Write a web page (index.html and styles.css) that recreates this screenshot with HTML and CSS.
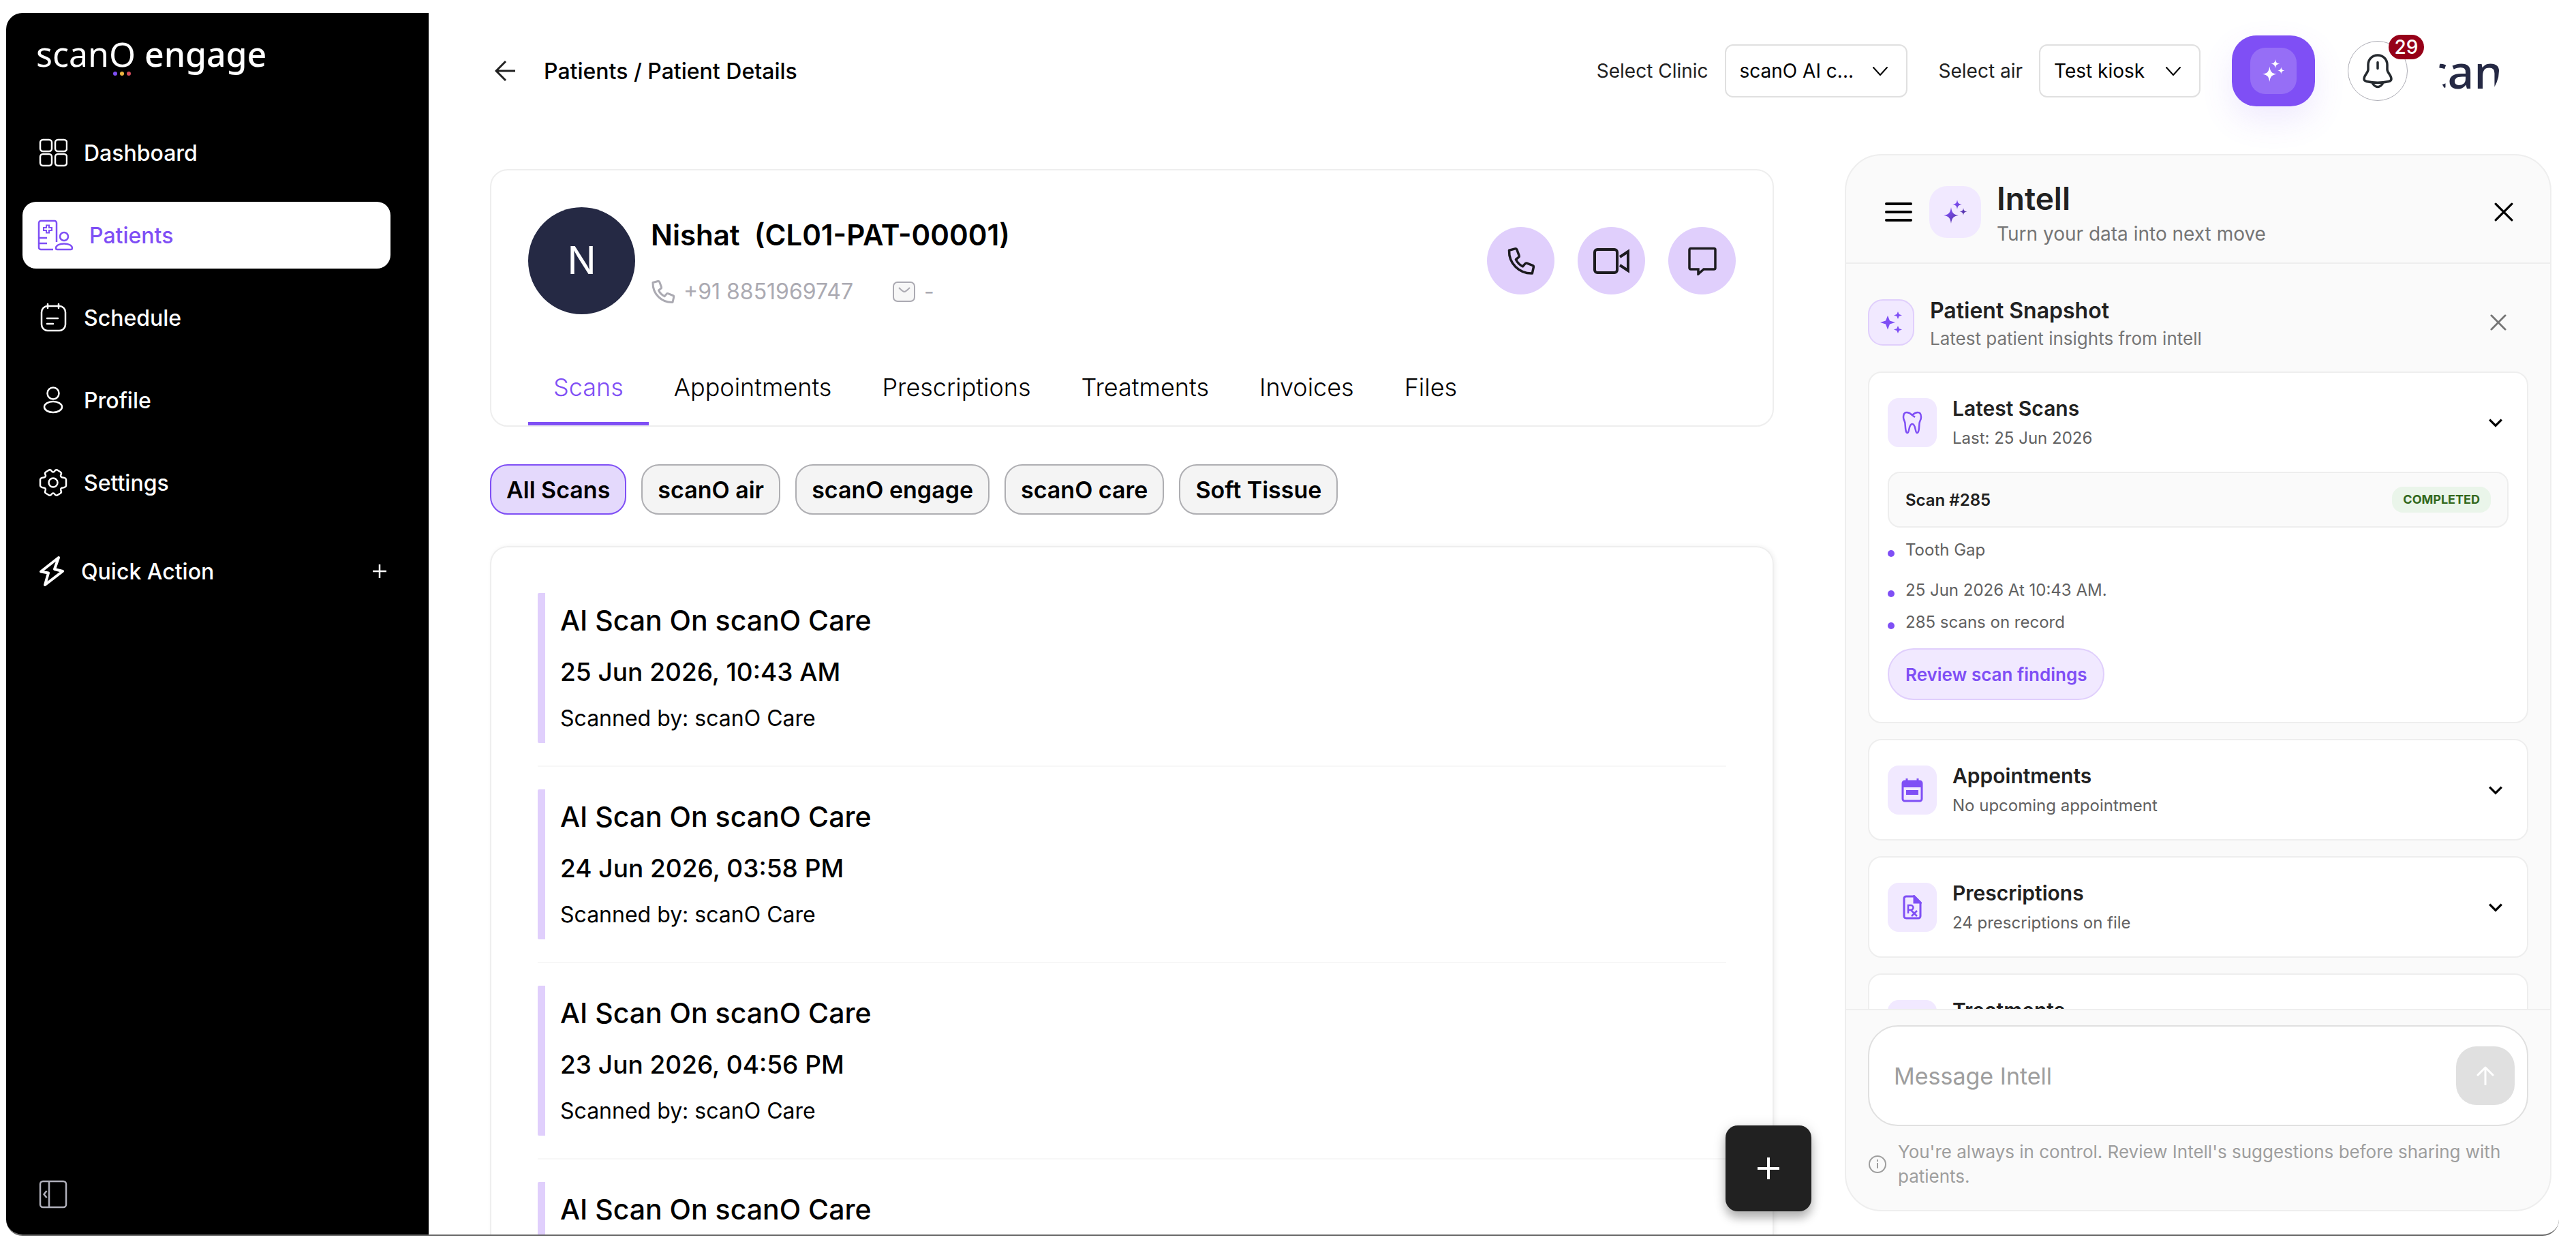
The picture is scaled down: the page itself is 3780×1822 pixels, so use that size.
FILE: index.html
```html
<!DOCTYPE html>
<html lang="en">
	<head>
		<meta charset="UTF-8" />
		<meta name="viewport" content="width=device-width, initial-scale=1.0" />
		<title>scanO engage - Patient Details</title>
		<link rel="stylesheet" href="styles.css">
	</head>
	<body>
		<!-- shared icons -->
		<svg class="defs" width="0" height="0" aria-hidden="true">
			<defs>
				<linearGradient id="spark-fill" x1="0" y1="0" x2="1" y2="1">
					<stop offset="0.3" stop-color="#7f4ff5" />
					<stop offset="1" stop-color="#3b2478" />
				</linearGradient>
				<symbol id="i-chevron" viewBox="0 0 24 24">
					<path d="M2 7l10 11L22 7" fill="none" stroke="currentColor" stroke-width="2" stroke-linecap="round" stroke-linejoin="round" />
				</symbol>
				<symbol id="i-chevron-bold" viewBox="0 0 20 20">
					<path d="M2 6l8 8 8-8" fill="none" stroke="currentColor" stroke-width="3" />
				</symbol>
				<symbol id="i-close" viewBox="0 0 26 26">
					<path d="M2 2l22 22M24 2L2 24" fill="none" stroke="currentColor" stroke-width="3" stroke-linecap="round" />
				</symbol>
				<symbol id="i-call" viewBox="0 0 36 36">
					<path d="M3 4.500L10.500 2.500a2 2 0 0 1 2.300 1.200L15.500 11a2 2 0 0 1-.6 2.200L11.500 16c2 4 4.800 6.800 8.600 8.700l3-3.400a2 2 0 0 1 2.200-.6l7.200 2.800a2 2 0 0 1 1.200 2.300L32 33.500C15.500 34 2.500 21 3 4.500z" fill="none" stroke="currentColor" stroke-width="3" stroke-linejoin="round" />
				</symbol>
				<symbol id="i-sparkles" viewBox="0 0 36 36">
					<path d="M12 11c1.200 8 3 10.600 11 12-8 1.400-9.800 4-11 12-1.200-8-3-10.600-11-12 8-1.400 9.800-4 11-12zM21 0c.8 5 2 6.200 7 7-5 .8-6.200 2-7 7-.8-5-2-6.200-7-7 5-.8 6.200-2 7-7zM30 12c.6 4 1.600 5 5.500 5.600C31.600 18.200 30.600 19.200 30 23c-.6-3.800-1.600-4.800-5.500-5.400C28.400 17 29.400 16 30 12z" />
				</symbol>
			</defs>
		</svg>

		<div class="app">
			<aside class="sidebar">
				<div class="logo">
					scan<span class="logo-o">O<svg class="logo-dots" viewBox="0 0 28 6"><circle cx="4" cy="3" r="3" fill="#7f4ff5" /><circle cx="14" cy="3" r="3" fill="#edb540" /><circle cx="24" cy="3" r="3" fill="#d34c5c" /></svg></span> <b>engage</b>
				</div>

				<nav class="nav">
					<a class="nav-item" href="#">
						<svg width="42" height="42" viewBox="0 0 42 42" fill="none" stroke="currentColor" stroke-width="2.500"><rect x="2" y="2" width="17" height="17" rx="4" /><rect x="24" y="2" width="17" height="17" rx="4" /><rect x="2" y="23" width="17" height="17" rx="4" /><rect x="24" y="23" width="17" height="17" rx="4" /></svg>
						Dashboard
					</a>
					<a class="nav-item active" href="#">
						<svg width="52" height="46" viewBox="0 0 52 46" fill="none" stroke="currentColor" stroke-width="2.500"><path d="M28 33V5a3 3 0 0 0-3-3H5a3 3 0 0 0-3 3v36a3 3 0 0 0 3 3h18M2 27h12M2 35h12" /><path d="M13 8.500h4v3.500h4v4h-4v3.500h-4V16H9v-4h4z" stroke-width="2" /><circle cx="39" cy="25" r="6" /><path d="M27 42c0-4 5-6.500 12-6.500S51 38 51 42c0 1.500-1 2-2 2H29c-1 0-2-.5-2-2z" /></svg>
						Patients
					</a>
					<a class="nav-item" href="#">
						<svg width="42" height="42" viewBox="0 0 42 42" fill="none" stroke="currentColor" stroke-width="2.500" stroke-linecap="round"><rect x="4" y="4" width="35" height="36" rx="9" /><path d="M13 1v6M29 1v6M12 22h16M12 30h9" /></svg>
						Schedule
					</a>
					<a class="nav-item" href="#">
						<svg width="42" height="42" viewBox="0 0 42 42" fill="none" stroke="currentColor" stroke-width="2.500"><circle cx="21" cy="11" r="8.500" /><ellipse cx="21" cy="31" rx="13" ry="8" /></svg>
						Profile
					</a>
					<a class="nav-item" href="#">
						<svg width="42" height="42" viewBox="0 0 42 42" fill="none" stroke="currentColor" stroke-width="2.500" stroke-linejoin="round"><circle cx="21" cy="21" r="6.500" /><path d="M15 2.500c2-.8 3 .3 3.800 1.600 1.200 1.900 3.200 1.900 4.400 0C24 2.800 25 1.700 27 2.500l4.500 2.700c1.800 1.200 1.700 2.700 1 4-1.200 2.300 0 4.300 2.500 4.400 3 .2 4.700 1 5 3v8.800c-.3 2-2 2.800-5 3-2.500.1-3.700 2.100-2.500 4.400.7 1.300.8 2.800-1 4L27 39.500c-2 .8-3-.3-3.800-1.600-1.200-1.900-3.200-1.900-4.400 0-.8 1.300-1.800 2.400-3.800 1.600l-4.500-2.700c-1.800-1.200-1.700-2.700-1-4 1.200-2.300 0-4.300-2.500-4.400-3-.2-4.700-1-5-3v-8.800c.3-2 2-2.800 5-3 2.500-.1 3.700-2.100 2.500-4.400-.7-1.300-.8-2.800 1-4z" /></svg>
						Settings
					</a>
				</nav>

				<button class="quick-action" type="button">
					<svg width="38" height="46" viewBox="0 0 38 46" fill="none" stroke="currentColor" stroke-width="4" stroke-linejoin="round"><path d="M29 3L3 23.500l11 2L9 43l26-20-12-3z" /></svg>
					Quick Action
					<svg class="quick-plus" width="20" height="20" viewBox="0 0 20 20" stroke="currentColor" stroke-width="2.500"><path d="M10 0v20M0 10h20" /></svg>
				</button>

				<button class="collapse" type="button" aria-label="Collapse menu">
					<svg width="42" height="42" viewBox="0 0 42 42" fill="none" stroke="currentColor" stroke-width="2.500"><rect x="2" y="2" width="38" height="38" rx="4" /><path d="M15 2v38M11.500 16L7.500 21l4 5" /></svg>
				</button>
			</aside>

			<main class="main">
				<header class="topbar">
					<button class="back" type="button" aria-label="Back">
						<svg width="32" height="32" viewBox="0 0 32 32" fill="none" stroke="currentColor" stroke-width="3"><path d="M30 16H3M16 2L2 16l14 14" /></svg>
					</button>
					<h1 class="crumbs">Patients / Patient Details</h1>

					<label class="picker-label" for="clinic">Select Clinic</label>
					<div class="picker picker-clinic">
						<select id="clinic">
							<option>scanO AI c...</option>
						</select>
						<svg><use href="#i-chevron" /></svg>
					</div>

					<label class="picker-label" for="air">Select air</label>
					<div class="picker picker-air">
						<select id="air">
							<option>Test kiosk</option>
						</select>
						<svg><use href="#i-chevron" /></svg>
					</div>

					<button class="ai-btn" type="button" aria-label="Open Intell">
						<span><svg width="34" height="34" fill="currentColor"><use href="#i-sparkles" /></svg></span>
					</button>

					<button class="bell" type="button" aria-label="Notifications">
						<svg width="46" height="52" viewBox="0 0 46 52" fill="none" stroke="currentColor" stroke-width="3.500" stroke-linecap="round" stroke-linejoin="round"><path d="M23 3c-8.500 0-14 6.500-14 14v7c0 5-6 8-6 14 0 2.500 2 3 4 3.500 11 2.500 21 2.500 32 0 2-.5 4-1 4-3.500 0-6-6-9-6-14v-7c0-7.500-5.500-14-14-14zM15 43.500c2 3.500 5 6 8 6s6-2.500 8-6M23 13.500v9" /></svg>
						<span class="badge">29</span>
					</button>

					<svg class="clinic-logo" viewBox="0 0 88 88"><text x="-21" y="70">can</text></svg>
				</header>

				<div class="content">
					<section class="patient">
						<div class="patient-card">
							<div class="patient-head">
								<div class="avatar">N</div>
								<div class="patient-info">
									<h2>Nishat &nbsp;(CL01-PAT-00001)</h2>
									<p>
										<svg width="36" height="36"><use href="#i-call" /></svg>
										<span class="phone">+91 8851969747</span>
										<svg width="34" height="32" viewBox="0 0 34 32" fill="#f7f7f7" stroke="currentColor" stroke-width="2"><rect x="1" y="2" width="31" height="28" rx="6" /><path d="M9 10c3 3 6 6 8 6s5-3 8-6" fill="none" /></svg>
										<span>-</span>
									</p>
								</div>
								<div class="contact">
									<button type="button" aria-label="Call"><svg width="42" height="42"><use href="#i-call" /></svg></button>
									<button type="button" aria-label="Video call"><svg width="54" height="38" viewBox="0 0 54 38" fill="none" stroke="currentColor" stroke-width="4"><rect x="2" y="2" width="33" height="34" rx="4" /><path d="M39 13l12-8v28l-12-8" /></svg></button>
									<button type="button" aria-label="Message"><svg width="42" height="42" viewBox="0 0 42 42" fill="none" stroke="currentColor" stroke-width="3.500"><path d="M4 2.500h34a2 2 0 0 1 2 2V31a2 2 0 0 1-2 2H23l-8 7v-7H4a2 2 0 0 1-2-2V4.500a2 2 0 0 1 2-2z" /></svg></button>
								</div>
							</div>
							<div class="tabs">
								<button class="tab active" type="button">Scans</button>
								<button class="tab" type="button">Appointments</button>
								<button class="tab" type="button">Prescriptions</button>
								<button class="tab" type="button">Treatments</button>
								<button class="tab" type="button">Invoices</button>
								<button class="tab" type="button">Files</button>
							</div>
						</div>

						<div class="chips">
							<button class="chip active" type="button">All Scans</button>
							<button class="chip" type="button">scanO air</button>
							<button class="chip" type="button">scanO engage</button>
							<button class="chip" type="button">scanO care</button>
							<button class="chip" type="button">Soft Tissue</button>
						</div>

						<ul class="scans">
							<li>
								<div class="scan">
									<h3>AI Scan On scanO Care</h3>
									<p class="scan-date">25 Jun 2026, 10:43 AM</p>
									<p class="scan-by">Scanned by: scanO Care</p>
								</div>
							</li>
							<li>
								<div class="scan">
									<h3>AI Scan On scanO Care</h3>
									<p class="scan-date">24 Jun 2026, 03:58 PM</p>
									<p class="scan-by">Scanned by: scanO Care</p>
								</div>
							</li>
							<li>
								<div class="scan">
									<h3>AI Scan On scanO Care</h3>
									<p class="scan-date">23 Jun 2026, 04:56 PM</p>
									<p class="scan-by">Scanned by: scanO Care</p>
								</div>
							</li>
							<li>
								<div class="scan">
									<h3>AI Scan On scanO Care</h3>
								</div>
							</li>
						</ul>

						<button class="fab" type="button" aria-label="Add">
							<svg width="32" height="32" viewBox="0 0 32 32" stroke="currentColor" stroke-width="4"><path d="M16 0v32M0 16h32" /></svg>
						</button>
					</section>

					<aside class="intell">
						<header class="intell-head">
							<button class="icon-btn" type="button" aria-label="Menu">
								<svg width="42" height="30" viewBox="0 0 42 30" stroke="currentColor" stroke-width="4" stroke-linecap="round"><path d="M3 3h36M3 15h36M3 27h36" /></svg>
							</button>
							<div class="tile tile-head"><svg width="36" height="36" fill="url(#spark-fill)"><use href="#i-sparkles" /></svg></div>
							<div class="intell-title">
								<h2>Intell</h2>
								<p>Turn your data into next move</p>
							</div>
							<button class="icon-btn" type="button" aria-label="Close"><svg width="28" height="28"><use href="#i-close" /></svg></button>
						</header>

						<div class="intell-body">
							<div class="snapshot">
								<div class="tile tile-snap"><svg width="32" height="32" viewBox="0 0 32 32" fill="currentColor"><path d="M11 6l3 7.500 8 2.500-8 2.500-3 8-3-8L0 16l8-2.500zM26 0l1.700 4L32 5.500 27.700 7 26 11l-1.700-4L20 5.500 24.300 4zM26 21l1.700 4 4.300 1.500-4.300 1.500L26 32l-1.700-4-4.300-1.500 4.300-1.500z" /></svg></div>
								<div>
									<h3>Patient Snapshot</h3>
									<p>Latest patient insights from intell</p>
								</div>
								<button class="icon-btn" type="button" aria-label="Close snapshot"><svg width="24" height="24"><use href="#i-close" /></svg></button>
							</div>

							<div class="card">
								<div class="card-head">
									<div class="tile"><svg width="30" height="34" viewBox="0 0 30 34" fill="none" stroke="currentColor" stroke-width="2.500" stroke-linejoin="round"><path d="M15 6C12 3 9 2 7 2 3.500 2 2 5 2 9c0 4 2 5 2.500 9 .5 6 .5 14 3.500 14 3 0 1.500-13 7-13s4 13 7 13c3 0 3-8 3.500-14C26 14 28 13 28 9c0-4-1.500-7-5-7-2 0-5 1-8 4zl4 3" /></svg></div>
									<div class="card-text">
										<h4>Latest Scans</h4>
										<p>Last: 25 Jun 2026</p>
									</div>
									<button class="icon-btn" type="button" aria-label="Toggle"><svg width="22" height="22"><use href="#i-chevron-bold" /></svg></button>
								</div>
								<div class="scan-row">
									<span>Scan #285</span>
									<span class="status">COMPLETED</span>
								</div>
								<ul class="facts">
									<li class="finding">Tooth Gap</li>
									<li>25 Jun 2026 At 10:43 AM.</li>
									<li>285 scans on record</li>
								</ul>
								<button class="review" type="button">Review scan findings</button>
							</div>

							<div class="card">
								<div class="card-head">
									<div class="tile"><svg width="32" height="36" viewBox="0 0 32 36"><path d="M8 1v6M24 1v6" stroke="currentColor" stroke-width="3" /><rect x="2" y="5" width="28" height="29" rx="3" fill="none" stroke="currentColor" stroke-width="3" /><path d="M1 6h30v8H1z" fill="currentColor" /><path d="M7 18h18v7H7z" fill="currentColor" /></svg></div>
									<div class="card-text">
										<h4>Appointments</h4>
										<p>No upcoming appointment</p>
									</div>
									<button class="icon-btn" type="button" aria-label="Toggle"><svg width="22" height="22"><use href="#i-chevron-bold" /></svg></button>
								</div>
							</div>

							<div class="card">
								<div class="card-head">
									<div class="tile"><svg width="28" height="36" viewBox="0 0 28 36" fill="none" stroke="currentColor" stroke-width="3"><path d="M17 2H5a3 3 0 0 0-3 3v26a3 3 0 0 0 3 3h18a3 3 0 0 0 3-3V11z" /><path d="M17 2v9h9z" fill="currentColor" /><path d="M8 27V15h4a3 3 0 0 1 0 7H8M12 22l9 9M21 23l-8 8" stroke-width="2.500" /></svg></div>
									<div class="card-text">
										<h4>Prescriptions</h4>
										<p>24 prescriptions on file</p>
									</div>
									<button class="icon-btn" type="button" aria-label="Toggle"><svg width="22" height="22"><use href="#i-chevron-bold" /></svg></button>
								</div>
							</div>

							<div class="card">
								<div class="card-head">
									<div class="tile"></div>
									<div class="card-text">
										<h4>Treatments</h4>
									</div>
								</div>
							</div>
						</div>

						<footer class="intell-foot">
							<div class="composer">
								<input type="text" placeholder="Message Intell" aria-label="Message Intell">
								<button type="button" aria-label="Send">
									<svg width="28" height="28" viewBox="0 0 28 28" fill="none" stroke="currentColor" stroke-width="3" stroke-linecap="round" stroke-linejoin="round"><path d="M14 27V2M3 13L14 2l11 11" /></svg>
								</button>
							</div>
							<p class="note">
								<svg width="28" height="28" viewBox="0 0 28 28" fill="none" stroke="currentColor" stroke-width="2"><circle cx="14" cy="14" r="12" /><path d="M14 12v8M14 7v3" /></svg>
								You're always in control. Review Intell's suggestions before sharing with patients.
							</p>
						</footer>
					</aside>
				</div>
			</main>
		</div>
	</body>
</html>
```
FILE: styles.css
```css
* {
	box-sizing: border-box;
}

body {
	margin: 0;
	background: #fff;
	color: #000;
	font-family: Inter, sans-serif;
	font-size: 32px;
}

h1, h2, h3, h4, p, ul {
	margin: 0;
	padding: 0;
	font-weight: 400;
}

ul {
	list-style: none;
}

button {
	padding: 0;
	border: none;
	background: none;
	color: inherit;
	font: inherit;
	cursor: pointer;
}

svg {
	flex: none;
}

.defs {
	position: absolute;
}

.app {
	display: flex;
	height: calc(100vh - 28px);
	margin: 19px 25px 9px 9px;
	border-bottom: 2px solid #6b6b6b;
	border-radius: 24px;
	overflow: hidden;
}

/* sidebar */
.sidebar {
	display: flex;
	flex-direction: column;
	flex: none;
	width: 620px;
	padding: 28px 56px 38px 24px;
	background: #000;
	color: #fff;
	font-weight: 500;
}

.logo {
	margin: 0 0 64px 20px;
	font-family: "Noto Sans", sans-serif;
	font-size: 50px;
	font-weight: 400;
	line-height: 64px;
}

.logo b {
	font-weight: 500;
}

.logo-o {
	position: relative;
}

.logo-dots {
	position: absolute;
	left: 5px;
	bottom: 2px;
	width: 28px;
	height: 6px;
}

.nav {
	display: flex;
	flex-direction: column;
	gap: 23px;
}

.nav-item {
	display: flex;
	align-items: center;
	gap: 24px;
	height: 98px;
	padding-left: 24px;
	border-radius: 20px;
	color: #fff;
	text-decoration: none;
}

.nav-item.active {
	padding-left: 22px;
	background: #fff;
	color: #7f4ff5;
}

.quick-action {
	display: flex;
	align-items: center;
	gap: 24px;
	height: 98px;
	margin-top: 32px;
	padding: 0 6px 0 24px;
}

.quick-plus {
	margin-left: auto;
}

.collapse {
	height: 42px;
	margin: auto auto 0 24px;
	color: #b0b0bb;
}

/* top bar */
.main {
	display: flex;
	flex-direction: column;
	flex: 1;
	min-width: 0;
	padding: 0 11px 0 90px;
}

.topbar {
	display: flex;
	align-items: center;
	flex: none;
	height: 170px;
	padding: 0 77px 0 7px;
}

.back {
	height: 32px;
	color: #212121;
}

.crumbs {
	margin: 0 auto 0 40px;
	font-size: 32px;
	font-weight: 500;
}

.picker-label {
	color: #212121;
	font-size: 28px;
}

.picker {
	position: relative;
	margin: 0 46px 0 24px;
}

.picker select {
	width: 100%;
	height: 78px;
	padding: 0 20px;
	border: 2px solid #e0e0e0;
	border-radius: 12px;
	background: #fff;
	color: #000;
	font: 400 28px Inter, sans-serif;
	appearance: none;
}

.picker svg {
	position: absolute;
	top: 27px;
	right: 28px;
	width: 24px;
	height: 24px;
	pointer-events: none;
}

.picker-clinic {
	width: 268px;
}

.picker-air {
	width: 237px;
}

.ai-btn {
	display: flex;
	align-items: center;
	justify-content: center;
	width: 122px;
	height: 104px;
	border-radius: 36px;
	background: #7f4ff5;
	box-shadow: 0 20px 48px rgba(127, 79, 245, 0.12);
	color: #fff;
}

.ai-btn span {
	display: flex;
	align-items: center;
	justify-content: center;
	width: 68px;
	height: 68px;
	border-radius: 22px;
	background: rgba(255, 255, 255, 0.18);
}

.bell {
	position: relative;
	display: flex;
	align-items: center;
	justify-content: center;
	width: 88px;
	height: 88px;
	margin: 0 46px 0 48px;
	border: 1px solid #aeaeb6;
	border-radius: 50%;
	color: #24292e;
}

.badge {
	position: absolute;
	top: -10px;
	right: -25px;
	width: 52px;
	height: 36px;
	border-radius: 18px;
	background: #960018;
	color: #fff;
	font-size: 28px;
	font-weight: 500;
	line-height: 36px;
	text-align: center;
}

.clinic-logo {
	width: 88px;
	height: 88px;
	border-radius: 50%;
	overflow: hidden;
	fill: #252944;
	font: 500 68px "Noto Sans", sans-serif;
}

/* patient */
.content {
	display: flex;
	flex: 1;
	gap: 104px;
	min-height: 0;
	padding-top: 37px;
}

.patient {
	position: relative;
	display: flex;
	flex-direction: column;
	flex: 1;
	min-width: 0;
	padding-top: 22px;
}

.patient-card {
	flex: none;
	padding: 54px 54px 0;
	border: 2px solid #eee;
	border-radius: 26px;
}

.patient-head {
	display: flex;
	align-items: center;
	margin-bottom: 56px;
}

.avatar {
	width: 157px;
	height: 157px;
	border-radius: 50%;
	background: #252944;
	color: #fff;
	font-size: 56px;
	line-height: 157px;
	text-align: center;
}

.patient-info {
	flex: 1;
	margin-left: 23px;
}

.patient-info h2 {
	margin-bottom: 36px;
	font-size: 42px;
	font-weight: 600;
	line-height: 54px;
}

.patient-info p {
	display: flex;
	align-items: center;
	gap: 12px;
	color: #abaab2;
	line-height: 40px;
}

.phone {
	margin-right: 46px;
}

.contact {
	display: flex;
	gap: 34px;
}

.contact button {
	display: flex;
	align-items: center;
	justify-content: center;
	width: 99px;
	height: 99px;
	border-radius: 50%;
	background: #e0cffc;
	color: #1c1b1f;
}

.tabs {
	display: flex;
}

.tab {
	height: 107px;
	padding: 0 37px;
	border-bottom: 5px solid transparent;
	font-size: 36px;
	font-weight: 300;
}

.tab.active {
	border-color: #7f4ff5;
	color: #7f4ff5;
}

.chips {
	display: flex;
	flex: none;
	gap: 22px;
	margin: 55px 0 46px;
}

.chip {
	height: 74px;
	padding: 0 22px;
	border: 2px solid #aeaeb2;
	border-radius: 26px;
	background: #f4f4f4;
	font-size: 34px;
	font-weight: 600;
}

.chip.active {
	border-color: #7f4ff5;
	background: #e4d9fc;
}

.scans {
	flex: 1;
	min-height: 0;
	padding: 67px 68px 0;
	border: 2px solid #eee;
	border-bottom: none;
	border-radius: 26px 26px 0 0;
	box-shadow: 2px 0 6px rgba(0, 0, 0, 0.06);
	overflow: hidden;
}

.scans li {
	margin-bottom: 33px;
	padding-bottom: 33px;
	border-bottom: 2px solid #f7f7f7;
}

.scan {
	height: 220px;
	padding: 12px 0 0 22px;
	border-left: 11px solid #e0cffc;
	border-radius: 2px;
}

.scan h3 {
	font-size: 41px;
	font-weight: 500;
	line-height: 56px;
}

.scan-date {
	margin: 24px 0;
	font-size: 37px;
	font-weight: 500;
	line-height: 48px;
}

.scan-by {
	line-height: 40px;
}

/* floats over the end of the list */
.fab {
	position: absolute;
	right: -55px;
	bottom: 34px;
	display: flex;
	align-items: center;
	justify-content: center;
	width: 126px;
	height: 126px;
	border-radius: 18px;
	background: #212121;
	box-shadow: 0 10px 14px rgba(0, 0, 0, 0.25), 0 2px 20px rgba(0, 0, 0, 0.12);
	color: #fff;
}

/* intell panel */
.intell {
	display: flex;
	flex-direction: column;
	flex: none;
	width: 1037px;
	margin-bottom: 34px;
	border: 2px solid #eee;
	border-radius: 54px;
	background: #fafafa;
	color: #212121;
	overflow: hidden;
}

.icon-btn {
	display: flex;
	color: #000;
}

.intell-head {
	display: flex;
	align-items: center;
	flex: none;
	height: 159px;
	padding: 8px 54px 0 56px;
	border-bottom: 2px solid #eee;
}

.tile {
	display: flex;
	align-items: center;
	justify-content: center;
	flex: none;
	width: 72px;
	height: 72px;
	margin-right: 23px;
	border-radius: 16px;
	background: #f1e9ff;
	color: #7f4ff5;
}

.tile-head {
	width: 76px;
	height: 76px;
	margin-left: 24px;
	border-radius: 26px;
}

.intell-title {
	flex: 1;
}

.intell-title h2 {
	font-size: 46px;
	font-weight: 600;
	line-height: 64px;
}

.intell-title p {
	color: #757575;
	font-size: 28px;
	line-height: 40px;
}

.intell-body {
	flex: 1;
	min-height: 0;
	padding: 45px 32px 0;
	overflow: hidden;
}

.snapshot {
	display: flex;
	align-items: center;
	margin-bottom: 31px;
}

.tile-snap {
	width: 68px;
	height: 68px;
	border: 2px solid #e0cffc;
	border-radius: 22px;
}

.snapshot h3 {
	font-size: 32px;
	font-weight: 600;
	line-height: 48px;
}

.snapshot p {
	color: #757575;
	font-size: 26px;
	line-height: 34px;
}

.snapshot .icon-btn {
	margin: 0 32px 0 auto;
	color: #757575;
}

.card {
	margin-bottom: 23px;
	padding: 32px 27px;
	border: 2px solid #eee;
	border-radius: 20px;
	background: #fff;
}

.card-head {
	display: flex;
	align-items: center;
	height: 81px;
}

.card-text {
	align-self: stretch;
}

.card-head h4 {
	font-size: 30px;
	font-weight: 600;
	line-height: 40px;
}

.card-head p {
	margin-top: 8px;
	color: #616161;
	font-size: 24px;
	line-height: 32px;
}

.card-head .icon-btn {
	margin: 0 8px 0 auto;
}

.scan-row {
	display: flex;
	align-items: center;
	justify-content: space-between;
	height: 82px;
	margin: 32px 0 17px;
	padding: 0 24px;
	border: 2px solid #eee;
	border-radius: 18px;
	background: #fafafa;
	font-size: 24px;
	font-weight: 600;
}

.status {
	padding: 0 16px;
	border-radius: 16px;
	background: #eaf5ea;
	color: #33691e;
	font-size: 18px;
	font-weight: 700;
	line-height: 38px;
}

.facts li {
	display: flex;
	align-items: center;
	gap: 16px;
	margin-bottom: 15px;
	color: #616161;
	font-size: 24px;
	line-height: 32px;
}

.facts li::before {
	content: "";
	width: 10px;
	height: 10px;
	margin-top: 10px;
	border-radius: 50%;
	background: #7f4ff5;
}

.facts .finding {
	margin-bottom: 27px;
}

.review {
	height: 76px;
	margin-top: 7px;
	padding: 0 24px;
	border: 2px solid #e0cffc;
	border-radius: 38px;
	background: #f1e9ff;
	color: #7f4ff5;
	font-size: 26px;
	font-weight: 600;
}

.intell-foot {
	flex: none;
	padding: 22px 32px 31px;
	border-top: 2px solid #eee;
}

.composer {
	display: flex;
	align-items: center;
	height: 148px;
	padding: 0 18px 0 36px;
	border: 2px solid #e0e0e0;
	border-radius: 44px;
	background: #fff;
}

.composer input {
	flex: 1;
	min-width: 0;
	padding: 0;
	border: none;
	outline: none;
	background: none;
	font: 400 34px Inter, sans-serif;
}

.composer input::placeholder {
	color: #9e9e9e;
}

.composer button {
	display: flex;
	align-items: center;
	justify-content: center;
	width: 86px;
	height: 86px;
	border-radius: 30px;
	background: #e0e0e0;
	color: #fff;
}

.note {
	display: flex;
	align-items: center;
	gap: 16px;
	margin-top: 20px;
	color: #9e9e9e;
	font-size: 26px;
	line-height: 36px;
}
```
